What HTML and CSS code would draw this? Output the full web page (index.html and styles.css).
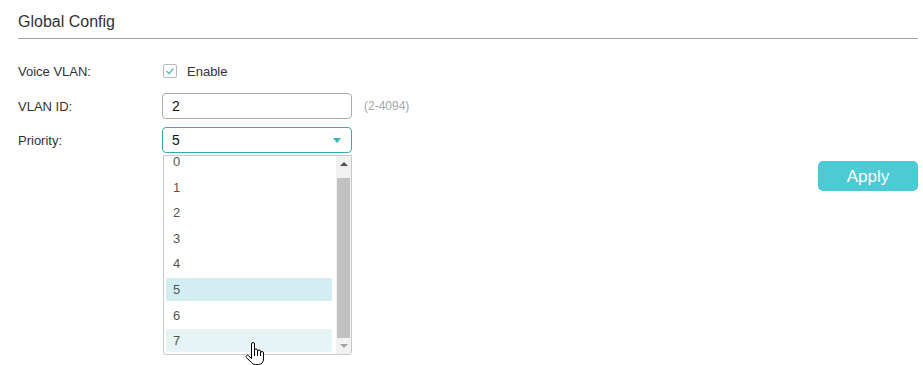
FILE: index.html
```html
<!DOCTYPE html>
<html lang="en">
<head>
  <meta charset="UTF-8">
  <meta name="viewport" content="width=device-width, initial-scale=1.0">
  <title>Voice VLAN - Global Config</title>
  <link rel="stylesheet" href="styles.css">
</head>
<body>
  <div class="page">
    <div class="section-title">Global Config</div>

    <div class="form">
      <div class="form-row form-row-first">
        <label class="form-label">Voice VLAN:</label>
        <div class="form-field">
          <span class="checkbox">
            <svg width="14" height="14" viewBox="0 0 14 14"><path d="M3.6 7.2 L6 9.6 L10.4 4.6" fill="none" stroke="#3aa9ad" stroke-width="1.1"/></svg>
          </span>
          <span class="checkbox-text">Enable</span>
        </div>
      </div>

      <div class="form-row">
        <label class="form-label">VLAN ID:</label>
        <div class="form-field">
          <div class="text-input">2</div>
          <span class="hint">(2-4094)</span>
        </div>
      </div>

      <div class="form-row">
        <label class="form-label">Priority:</label>
        <div class="form-field">
          <div class="select-wrap">
            <div class="select">
              <span>5</span>
              <span class="select-arrow"></span>
            </div>
            <div class="dropdown">
              <ul class="dropdown-list">
                <li>0</li>
                <li>1</li>
                <li>2</li>
                <li>3</li>
                <li>4</li>
                <li class="selected">5</li>
                <li>6</li>
                <li class="hover">7</li>
              </ul>
              <div class="scrollbar">
                <span class="scroll-up"></span>
                <span class="scroll-thumb"></span>
                <span class="scroll-down"></span>
              </div>
            </div>
          </div>
        </div>
      </div>
    </div>

    <div class="actions">
      <button class="btn">Apply</button>
    </div>

    <svg class="cursor" width="21" height="25" viewBox="0 0 21 25">
      <path d="M6.5 12V2a1.5 1.5 0 0 1 3 0v8V8.5a1.5 1.5 0 0 1 3 0V10v-.5a1.5 1.5 0 0 1 3 0v1.5a1.5 1.5 0 0 1 3 0v6c0 3.2-2 5.5-5 5.5h-3.2c-1.8 0-3-.8-4-2.2L1.4 15.6a1.4 1.4 0 0 1 2.2-1.8L6.5 16.5z" fill="#fff" stroke="#000" stroke-width="1"/>
      <path d="M9.5 10v4M12.5 10v4M15.5 11v3" stroke="#000" stroke-width="1" fill="none"/>
    </svg>
  </div>
</body>
</html>
```

FILE: styles.css
```css
:root {
  --text-main: #333333;
  --text-item: #555555;
  --text-hint: #a8a8a8;
  --teal: #3aa9ad;
  --teal-light: #4ccbd5;
  --border: #ababab;
}

* {
  box-sizing: border-box;
  margin: 0;
  padding: 0;
}

html,
body {
  height: 100%;
  overflow: hidden;
}

body {
  font-family: "Liberation Sans", Arial, sans-serif;
  color: var(--text-main);
  background: #ffffff;
}

.page {
  position: relative;
  height: 100%;
  padding: 0 5px 0 18px;
}

.section-title {
  font-size: 16px;
  line-height: 20px;
  padding: 12px 0 6px;
  border-bottom: 1px solid #a4a4a4;
}

.form {
  margin-top: 19px;
}

.form-row {
  display: flex;
  align-items: center;
  height: 26px;
  margin-bottom: 8px;
}

.form-row-first {
  margin-bottom: 9px;
}

.form-label {
  width: 144px;
  font-size: 13px;
}

.form-field {
  display: flex;
  align-items: center;
}

.checkbox {
  display: flex;
  width: 14px;
  height: 14px;
  margin-left: 1px;
  border: 1px solid #b8b8b8;
  border-radius: 2px;
}

.checkbox svg {
  margin: -1px;
}

.checkbox-text {
  margin-left: 10px;
  font-size: 13px;
}

.text-input,
.select {
  width: 190px;
  height: 26px;
  padding-left: 9px;
  font-size: 14px;
  line-height: 24px;
  color: #111111;
  border: 1px solid var(--border);
  border-radius: 4px;
}

.hint {
  margin-left: 12px;
  font-size: 12px;
  color: var(--text-hint);
}

.select-wrap {
  position: relative;
}

.select {
  display: flex;
  align-items: center;
  justify-content: space-between;
  padding-right: 10px;
  border-color: var(--teal);
}

.select-arrow {
  width: 0;
  height: 0;
  border-left: 4.5px solid transparent;
  border-right: 4.5px solid transparent;
  border-top: 5px solid #35b3bf;
}

.dropdown {
  position: absolute;
  top: 28px;
  left: 1px;
  right: 0;
  height: 200px;
  display: flex;
  background: #ffffff;
  border: 1px solid #c8c8c8;
  border-radius: 0 0 3px 3px;
  overflow: hidden;
  z-index: 2;
}

.dropdown-list {
  flex: 1;
  list-style: none;
  margin-top: -6px;
  padding: 0 4px 0 2px;
}

.dropdown-list li {
  height: 23px;
  line-height: 23px;
  margin-bottom: 2.6px;
  padding-left: 7px;
  font-size: 13px;
  color: var(--text-item);
  border-radius: 2px;
}

.dropdown-list li.selected {
  background: #d3eef2;
}

.dropdown-list li.hover {
  background: #e6f4f6;
}

.scrollbar {
  width: 15px;
  display: flex;
  flex-direction: column;
  align-items: center;
  background: #f1f1f1;
}

.scroll-up,
.scroll-down {
  width: 0;
  height: 0;
  border-left: 4px solid transparent;
  border-right: 4px solid transparent;
}

.scroll-up {
  margin: 6px 0 12px;
  border-bottom: 4px solid #505050;
}

.scroll-thumb {
  width: 13px;
  flex: 1;
  background: #c1c1c1;
}

.scroll-down {
  margin: 6px 0 6px;
  border-top: 4px solid #a3a3a3;
}

.actions {
  display: flex;
  justify-content: flex-end;
  margin-top: 8px;
}

.btn {
  width: 100px;
  height: 30px;
  padding-top: 2px;
  font-family: inherit;
  font-size: 17px;
  line-height: 28px;
  color: #ffffff;
  background: var(--teal-light);
  border: none;
  border-radius: 5px;
}

.cursor {
  position: absolute;
  left: 245px;
  top: 342px;
  z-index: 3;
}
```
